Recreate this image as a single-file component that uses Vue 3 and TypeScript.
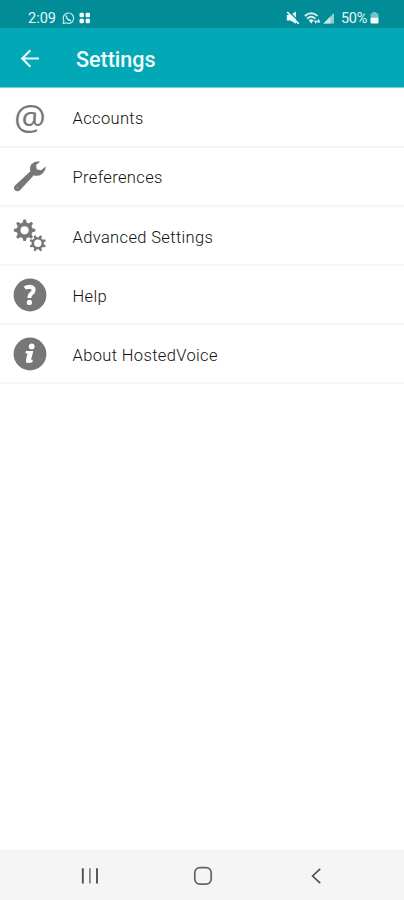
<script setup lang="ts">
type IconName = 'at' | 'wrench' | 'gears' | 'help' | 'info'

interface SettingsItem {
  label: string
  icon: IconName
}

const items: SettingsItem[] = [
  { label: 'Accounts', icon: 'at' },
  { label: 'Preferences', icon: 'wrench' },
  { label: 'Advanced Settings', icon: 'gears' },
  { label: 'Help', icon: 'help' },
  { label: 'About HostedVoice', icon: 'info' },
]

// Outline of a toothed wheel with a round hole (even-odd filled).
function gear(cx: number, cy: number, outer: number, body: number, hole: number, turn: number): string {
  const teeth = 8
  const step = (Math.PI * 2) / teeth
  const points: string[] = []
  for (let i = 0; i < teeth; i++) {
    const mid = i * step + turn
    const corners: [number, number][] = [
      [body, -0.32],
      [outer, -0.14],
      [outer, 0.14],
      [body, 0.32],
    ]
    for (const [r, off] of corners) {
      const a = mid + off * step
      points.push(`${(cx + r * Math.cos(a)).toFixed(2)} ${(cy + r * Math.sin(a)).toFixed(2)}`)
    }
  }
  const ring = `M${cx - hole} ${cy}a${hole} ${hole} 0 1 0 ${hole * 2} 0a${hole} ${hole} 0 1 0 ${-hole * 2} 0Z`
  return `M${points.join('L')}Z${ring}`
}

const bigGear = gear(12.6, 12.3, 10.8, 8, 4.1, 0)
const smallGear = gear(25.8, 25.3, 8.4, 6.1, 3.7, Math.PI / 8)
</script>

<template>
  <div class="screen">
    <div class="status">
      <span class="clock">2:09</span>
      <svg class="call" width="13" height="13" viewBox="0 0 13 13">
        <path d="M1.2 11.4 1.8 8.6A5.2 5.2 0 1 1 4 10.8Z" fill="none" stroke="#c5e9ec" stroke-width="1.2" />
        <path d="M4.3 3.4C4 6.1 6.2 8.5 9 8.5" fill="none" stroke="#d8f1f3" stroke-width="1.5" />
      </svg>
      <svg class="apps" width="12" height="12" viewBox="0 0 12 12" fill="#f2fcfc">
        <rect x="0.5" y="0.8" width="4.4" height="4.4" rx="1.2" />
        <rect x="6.6" y="0.8" width="4.4" height="4.4" rx="1.2" />
        <rect x="0.5" y="6.8" width="4.4" height="4.4" rx="1.2" />
        <rect x="6.6" y="6.8" width="4.4" height="4.4" rx="1.2" />
      </svg>
      <span class="spacer"></span>
      <svg class="mute" width="14" height="14" viewBox="0 0 14 14">
        <path d="M.8 4H4.3L10 .6V12.8L4.3 9.6H.8Z" fill="#e9f8f9" />
        <path d="M2.6 .2 14 11.4" stroke="#018c97" stroke-width="1.3" />
        <path d="M1.2 1 12.8 12.8" stroke="#e9f8f9" stroke-width="1.7" />
      </svg>
      <svg class="wifi" width="17" height="13" viewBox="0 0 17 13">
        <g fill="none" stroke="#d2eef0" stroke-width="1.8">
          <path d="M.8 4Q7.2-1.4 13.6 4" />
          <path d="M3 6.6Q7.2 3 11.4 6.6" />
        </g>
        <path d="M4.7 8.2Q7.2 6.4 9.7 8.2L7.3 11.6Z" fill="#e9f8f9" />
        <path d="M10 8.5 11.7 12 13.2 8.5ZM12.9 10.6 14.6 6.6 16.3 10.6Z" fill="#e9f8f9" />
      </svg>
      <svg class="signal" width="12" height="12" viewBox="0 0 12 12">
        <path d="M.5 11.5 11 1V11.5Z" fill="#92cfd4" />
        <path d="M.5 11.5 7.5 4.5V11.5Z" fill="#c6e8ea" />
      </svg>
      <span class="percent">50%</span>
      <svg class="battery" width="9" height="12" viewBox="0 0 9 12">
        <path d="M2.7 0H6.3V1.2H7.2Q8.5 1.2 8.5 2.5V5.5H.5V2.5Q.5 1.2 1.8 1.2H2.7Z" fill="#77c1c8" />
        <path d="M.5 5.5H8.5V10.3Q8.5 11.5 7.3 11.5H1.7Q.5 11.5 .5 10.3Z" fill="#f2fcfc" />
      </svg>
    </div>

    <header class="bar">
      <svg width="20" height="20" viewBox="0 0 20 20" fill="none" stroke="#e8fafb" stroke-width="2.1">
        <path d="M19 9.5H2.4M10.4 1.2 2.2 9.5 10.4 17.8" />
      </svg>
      <h1 class="title">Settings</h1>
    </header>

    <main class="list">
      <div v-for="item in items" :key="item.label" class="row">
        <span v-if="item.icon === 'at'" class="icon at">@</span>
        <svg v-else class="icon" width="36" height="36" viewBox="0 0 36 36" fill="#777">
          <g v-if="item.icon === 'wrench'">
            <path d="M28.2 2.6Q22.4 1.6 19.4 5.3Q17.2 8.3 18.4 12.2L3 26.4Q.9 28.9 3 31.2Q5.5 33.4 8 31.2L21.8 16.2Q27 18 30.8 14.2Q33.9 11.2 33.8 7.2L29.2 11.2L24.9 10.4L24 6.3Z" />
            <circle cx="5.5" cy="28.9" r="1.1" fill="#929292" />
          </g>
          <g v-else-if="item.icon === 'gears'" fill-rule="evenodd">
            <path :d="bigGear" />
            <path :d="smallGear" />
          </g>
          <g v-else-if="item.icon === 'help'">
            <circle cx="18" cy="18" r="16.4" />
            <path d="M12.8 11.2Q14.8 9.7 17.8 9.7Q21.6 9.9 21.6 13Q21.6 15 19.4 16.6Q17.4 17.9 17.4 21" fill="none" stroke="#fff" stroke-width="4" />
            <circle cx="17.4" cy="25.4" r="2.6" fill="#fff" />
          </g>
          <g v-else>
            <circle cx="18" cy="18" r="16.4" />
            <circle cx="19.7" cy="10.4" r="2.9" fill="#fff" />
            <path d="M13.9 14.9H21.3L19.2 23.2Q19 24.2 20.9 23.8L20.3 26.3Q13.6 28.6 13.9 24.2L15.4 17.6Q14.4 17.2 13.4 17.4Z" fill="#fff" />
          </g>
        </svg>
        <span class="label">{{ item.label }}</span>
      </div>
    </main>

    <nav class="nav">
      <svg width="18" height="18" viewBox="0 0 18 18" fill="none" stroke-width="1.8">
        <path d="M1.8 1.2V16.5M16 1.2V16.5" stroke="#484848" />
        <path d="M8.9 1.2V16.5" stroke="#858585" />
      </svg>
      <svg width="20" height="20" viewBox="0 0 20 20" fill="none" stroke="#646464" stroke-width="1.7">
        <rect x="1.8" y="1.7" width="16.4" height="16.4" rx="5" />
      </svg>
      <svg width="18" height="18" viewBox="0 0 18 18" fill="none" stroke="#505050" stroke-width="1.7">
        <path d="M13.2 1.8 5.6 9 13.2 16.2" />
      </svg>
    </nav>
  </div>
</template>

<style>
body {
  margin: 0;
}
</style>

<style scoped>
.screen {
  display: flex;
  flex-direction: column;
  width: 404px;
  height: 900px;
  background: #fff;
  font-family: Roboto, 'Liberation Sans', sans-serif;
  overflow: hidden;
}

.status {
  display: flex;
  align-items: center;
  box-sizing: border-box;
  flex: none;
  height: 28px;
  padding: 8px 25px 0 28px;
  background: #018c97;
  color: #e4f6f7;
  font-size: 14.5px;
  line-height: 18px;
}

.clock {
  width: 28px;
  margin-right: 6px;
  padding-top: 2px;
}

.call {
  margin-right: 4px;
}

.spacer {
  flex: 1;
}

.mute {
  margin-right: 4px;
}

.wifi {
  margin-right: 2px;
}

.signal {
  margin-right: 6px;
}

.percent {
  width: 27px;
  margin-right: 2px;
  padding-top: 2px;
  letter-spacing: -0.3px;
}

.bar {
  display: flex;
  align-items: center;
  box-sizing: border-box;
  flex: none;
  height: 60px;
  padding: 3px 20px 0;
  gap: 36px;
  background: #02a8b6;
  border-bottom: 1px solid #7ccdd4;
}

.title {
  margin: 0;
  padding-top: 2px;
  color: #f1fcfc;
  font-size: 21.5px;
  font-weight: 500;
  line-height: 28px;
}

.list {
  flex: 1;
  padding-top: 1px;
}

.row {
  display: flex;
  align-items: center;
  box-sizing: border-box;
  height: 59.1px;
  padding-left: 12px;
  gap: 24.5px;
  border-bottom: 2px solid #f6f6f6;
}

.icon {
  flex: none;
}

.at {
  width: 36px;
  padding-bottom: 3px;
  color: #777;
  font-family: 'Open Sans', 'Noto Sans', sans-serif;
  font-size: 35.5px;
  line-height: 50px;
  text-align: center;
}

.label {
  padding-top: 3.6px;
  color: #111;
  font-size: 16.5px;
  font-weight: 300;
  letter-spacing: 0.36px;
  line-height: 22px;
}

.nav {
  display: flex;
  align-items: center;
  justify-content: space-between;
  box-sizing: border-box;
  flex: none;
  height: 50px;
  padding: 2px 79px 0 81px;
  background: #f5f5f5;
}
</style>
